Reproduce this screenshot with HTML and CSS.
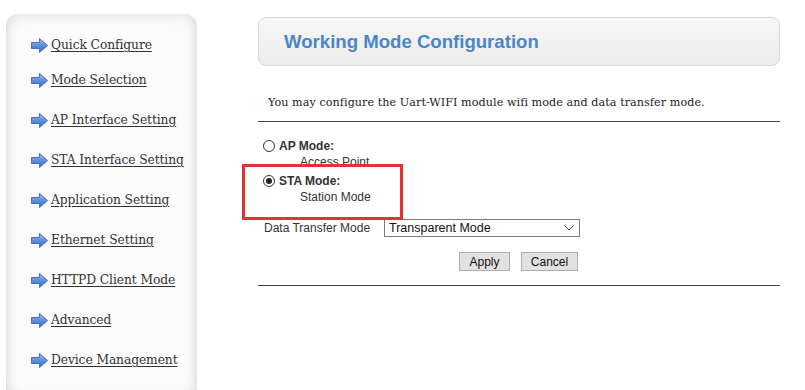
FILE: index.html
```html
<!DOCTYPE html>
<html>
<head>
<meta charset="utf-8">
<link rel="stylesheet" href="styles.css">
</head>
<body>
<div class="page">
  <aside class="sidebar">
    <ul class="nav">
      <li class="nav-item"><svg class="arrow" viewBox="0 0 17 15" width="17" height="15"><defs><linearGradient id="ag" x1="0" y1="0" x2="0" y2="1"><stop offset="0" stop-color="#9cc0f0"/><stop offset="0.5" stop-color="#5f8fdc"/><stop offset="1" stop-color="#3c68bf"/></linearGradient></defs><polygon points="0.5,4.5 8.5,4.5 8.5,0.5 16.5,7.5 8.5,14.5 8.5,10.5 0.5,10.5" fill="url(#ag)" stroke="#4a6fb8" stroke-width="1"/></svg><a href="#">Quick Configure</a></li>
      <li class="nav-item"><svg class="arrow" viewBox="0 0 17 15" width="17" height="15"><polygon points="0.5,4.5 8.5,4.5 8.5,0.5 16.5,7.5 8.5,14.5 8.5,10.5 0.5,10.5" fill="url(#ag)" stroke="#4a6fb8" stroke-width="1"/></svg><a href="#">Mode Selection</a></li>
      <li class="nav-item"><svg class="arrow" viewBox="0 0 17 15" width="17" height="15"><polygon points="0.5,4.5 8.5,4.5 8.5,0.5 16.5,7.5 8.5,14.5 8.5,10.5 0.5,10.5" fill="url(#ag)" stroke="#4a6fb8" stroke-width="1"/></svg><a href="#">AP Interface Setting</a></li>
      <li class="nav-item"><svg class="arrow" viewBox="0 0 17 15" width="17" height="15"><polygon points="0.5,4.5 8.5,4.5 8.5,0.5 16.5,7.5 8.5,14.5 8.5,10.5 0.5,10.5" fill="url(#ag)" stroke="#4a6fb8" stroke-width="1"/></svg><a href="#">STA Interface Setting</a></li>
      <li class="nav-item"><svg class="arrow" viewBox="0 0 17 15" width="17" height="15"><polygon points="0.5,4.5 8.5,4.5 8.5,0.5 16.5,7.5 8.5,14.5 8.5,10.5 0.5,10.5" fill="url(#ag)" stroke="#4a6fb8" stroke-width="1"/></svg><a href="#">Application Setting</a></li>
      <li class="nav-item"><svg class="arrow" viewBox="0 0 17 15" width="17" height="15"><polygon points="0.5,4.5 8.5,4.5 8.5,0.5 16.5,7.5 8.5,14.5 8.5,10.5 0.5,10.5" fill="url(#ag)" stroke="#4a6fb8" stroke-width="1"/></svg><a href="#">Ethernet Setting</a></li>
      <li class="nav-item"><svg class="arrow" viewBox="0 0 17 15" width="17" height="15"><polygon points="0.5,4.5 8.5,4.5 8.5,0.5 16.5,7.5 8.5,14.5 8.5,10.5 0.5,10.5" fill="url(#ag)" stroke="#4a6fb8" stroke-width="1"/></svg><a href="#">HTTPD Client Mode</a></li>
      <li class="nav-item"><svg class="arrow" viewBox="0 0 17 15" width="17" height="15"><polygon points="0.5,4.5 8.5,4.5 8.5,0.5 16.5,7.5 8.5,14.5 8.5,10.5 0.5,10.5" fill="url(#ag)" stroke="#4a6fb8" stroke-width="1"/></svg><a href="#">Advanced</a></li>
      <li class="nav-item"><svg class="arrow" viewBox="0 0 17 15" width="17" height="15"><polygon points="0.5,4.5 8.5,4.5 8.5,0.5 16.5,7.5 8.5,14.5 8.5,10.5 0.5,10.5" fill="url(#ag)" stroke="#4a6fb8" stroke-width="1"/></svg><a href="#">Device Management</a></li>
    </ul>
  </aside>
  <main class="main">
    <div class="header"><h1 class="title">Working Mode Configuration</h1></div>
    <p class="desc">You may configure the Uart-WIFI module wifi mode and data transfer mode.</p>
    <div class="rule"></div>
    <div class="modes">
      <div class="mode">
        <label class="mode-row"><input type="radio" name="mode" class="radio"><span class="mode-name">AP Mode:</span></label>
        <div class="mode-sub">Access Point</div>
      </div>
      <div class="mode mode-sta">
        <label class="mode-row"><input type="radio" name="mode" class="radio" checked><span class="mode-name">STA Mode:</span></label>
        <div class="mode-sub">Station Mode</div>
      </div>
    </div>
    <div class="field">
      <span class="field-label">Data Transfer Mode</span>
      <div class="select-wrap">
        <select class="select"><option>Transparent Mode</option></select>
        <svg class="chev" width="10" height="6" viewBox="0 0 10 6"><polyline points="0.5,0.5 5,5 9.5,0.5" fill="none" stroke="#555" stroke-width="1"/></svg>
      </div>
    </div>
    <div class="buttons">
      <button class="btn btn-apply">Apply</button>
      <button class="btn btn-cancel">Cancel</button>
    </div>
    <div class="rule rule-bottom"></div>
    <div class="highlight"></div>
  </main>
</div>
</body>
</html>
```
FILE: styles.css
```css
html, body {
  margin: 0;
  padding: 0;
  background: #fff;
  overflow: hidden;
}
.page {
  display: flex;
  align-items: flex-start;
  width: 805px;
  height: 390px;
}
.sidebar {
  margin-left: 6px;
  margin-top: 14px;
  width: 191px;
  height: 392px;
  border-radius: 12px;
  background: #fbfbfb;
  box-shadow: inset 0 0 14px rgba(0,0,0,0.13), inset 0 -10px 12px rgba(0,0,0,0.06);
  box-sizing: border-box;
}
.nav {
  list-style: none;
  margin: 0;
  padding: 16px 0 0 25px;
}
.nav-item {
  display: flex;
  align-items: center;
  height: 40px;
}
.nav-item:first-child {
  height: 30px;
}
.arrow {
  flex: none;
  margin-right: 3px;
}
.nav-item a {
  font-family: "DejaVu Serif", "Liberation Serif", serif;
  font-size: 12.3px;
  color: #333;
  text-decoration: underline;
  text-underline-offset: 2px;
  letter-spacing: -0.1px;
}
.main {
  position: relative;
  margin-left: 61px;
  margin-top: 17px;
  width: 522px;
  font-family: "Liberation Sans", Arial, sans-serif;
  font-size: 12px;
  color: #222;
}
.header {
  height: 49px;
  box-sizing: border-box;
  border: 1px solid #d8d8d8;
  border-radius: 8px;
  background: linear-gradient(#f7f7f7, #ececec);
  display: flex;
  align-items: center;
  padding-left: 25px;
}
.title {
  margin: 0;
  font-family: "Liberation Sans", Arial, sans-serif;
  font-size: 18.6px;
  font-weight: bold;
  color: #4a87c7;
}
.desc {
  margin: 30px 0 0 10px;
  height: 14px;
  line-height: 14px;
  font-family: "DejaVu Serif", "Liberation Serif", serif;
  font-size: 11.2px;
  letter-spacing: 0.05px;
  color: #222;
}
.rule {
  margin-top: 11px;
  height: 1px;
  background: #444;
}
.modes {
  margin-top: 16px;
  padding-left: 5px;
}
.mode-row {
  display: flex;
  align-items: center;
  height: 16px;
}
.radio {
  appearance: none;
  -webkit-appearance: none;
  margin: 0 4px 0 0;
  width: 12px;
  height: 12px;
  border: 1px solid #333;
  border-radius: 50%;
  box-sizing: border-box;
  background: #fff;
  position: relative;
}
.radio:checked::after {
  content: "";
  position: absolute;
  left: 2px;
  top: 2px;
  width: 6px;
  height: 6px;
  border-radius: 50%;
  background: #222;
}
.mode-name {
  font-weight: bold;
  color: #333;
}
.mode-sub {
  height: 16px;
  line-height: 16px;
  padding-left: 37px;
  color: #333;
}
.mode-sta {
  margin-top: 3px;
}
.field {
  display: flex;
  align-items: center;
  margin-top: 14px;
  padding-left: 6px;
}
.field-label {
  width: 120px;
  color: #333;
}
.select-wrap {
  position: relative;
  width: 196px;
  height: 18px;
}
.select {
  appearance: none;
  -webkit-appearance: none;
  width: 100%;
  height: 18px;
  box-sizing: border-box;
  border: 1px solid #7a7a7a;
  border-radius: 0;
  background: #fff;
  padding: 0 0 0 4px;
  font-family: "Liberation Sans", Arial, sans-serif;
  font-size: 12.5px;
  color: #111;
}
.chev {
  position: absolute;
  right: 6px;
  top: 6px;
  pointer-events: none;
}
.buttons {
  display: flex;
  gap: 11px;
  margin-top: 15px;
  padding-left: 201px;
}
.btn {
  height: 19px;
  box-sizing: border-box;
  border: 1px solid #adadad;
  background: #e1e1e1;
  font-family: "Liberation Sans", Arial, sans-serif;
  font-size: 12px;
  color: #111;
  padding: 0;
  border-radius: 0;
}
.btn-apply { width: 51px; }
.btn-cancel { width: 57px; }
.rule-bottom {
  margin-top: 14px;
}
.highlight {
  position: absolute;
  left: -16px;
  top: 147px;
  width: 161px;
  height: 56px;
  box-sizing: border-box;
  border: 3px solid #e23434;
}
```
